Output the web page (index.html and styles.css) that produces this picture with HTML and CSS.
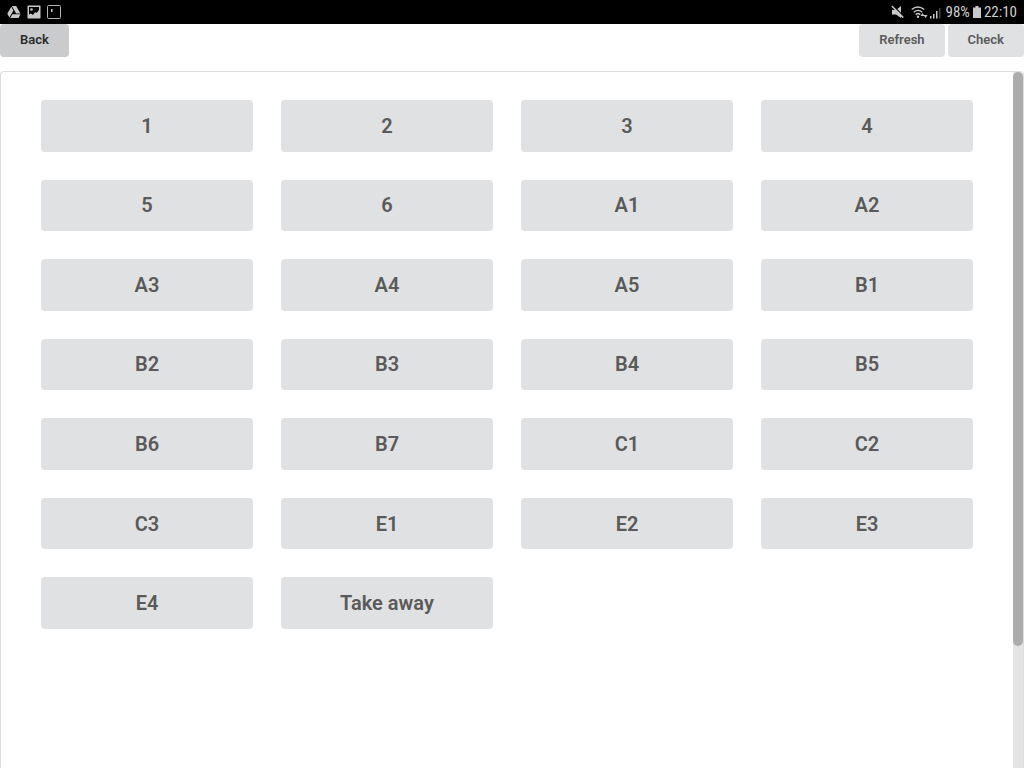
FILE: index.html
```html
<!DOCTYPE html>
<html lang="en">
<head>
<meta charset="utf-8">
<meta name="viewport" content="width=device-width, initial-scale=1">
<title>Tables</title>
<link rel="stylesheet" href="styles.css">
</head>
<body>
<header class="status">
  <div class="status-left">
    <svg width="14" height="14" viewBox="0 0 14 14" fill="#c8c8c8" aria-hidden="true"><path d="M4.800 1h4.400l4.200 7.400H9.100z"/><path d="M4.200 1.800l2.200 3.800-4 7L.3 8.800z"/><path d="M5.400 9.200h8.200L11.500 13H3.200z"/></svg>
    <svg width="14" height="14" viewBox="0 0 14 14" aria-hidden="true"><path fill="#c8c8c8" fill-rule="evenodd" d="M1 .5h12l.5.5v12l-.5.5H1L.5 13V1zM2 2v7.500l2-1 2 1.500 2-3 1.500 1L12 5V2z"/><circle cx="4.500" cy="4.500" r="1.300" fill="#c8c8c8"/></svg>
    <svg width="14" height="14" viewBox="0 0 14 14" aria-hidden="true"><rect x=".5" y=".5" width="13" height="13" rx="1" fill="none" stroke="#b4b4b4"/><path fill="#c8c8c8" d="M4 4h1.500v3H4z"/></svg>
  </div>
  <div class="status-right">
    <svg width="13" height="14" viewBox="0 0 13 14" aria-hidden="true"><path fill="#c8c8c8" d="M1 5h4l5-4v12L5 9.500H1z"/><path d="M1.500 0l12 12" stroke="#000" stroke-width="1.200"/><path d="M.8 1l11.400 11.600" stroke="#c8c8c8" stroke-width="1.500"/></svg>
    <svg class="wifi" width="32" height="14" viewBox="0 0 32 14" aria-hidden="true"><g fill="none" stroke="#c8c8c8" stroke-width="1.400"><path d="M.7 4.500q6-5 12.600 0M2.700 7.200q4.300-3.600 8.600 0M4.700 9.600q2.300-2 4.600 0"/></g><circle cx="7" cy="11.800" r="1.200" fill="#c8c8c8"/><path fill="#c8c8c8" d="M11.500 8l2 3h-4zM14.500 13l-2-3h4zM19 11h1.500v2.500H19zM22 9h1.500v4.500H22zM25 6h1.500v7.500H25z"/><path fill="#444" d="M28 3h1.500v10.500H28z"/></svg>
    <span class="level">98%</span>
    <svg width="8" height="12" viewBox="0 0 8 12" aria-hidden="true"><path fill="#c8c8c8" d="M2.500 0h3v1.500H8V12H0V1.500h2.500z"/></svg>
    <time class="clock">22:10</time>
  </div>
</header>
<nav class="toolbar">
  <button class="btn btn-back" type="button">Back</button>
  <div class="actions">
    <button class="btn" type="button">Refresh</button>
    <button class="btn" type="button">Check</button>
  </div>
</nav>
<main class="panel">
  <div class="tables">
    <button class="tile" type="button">1</button>
    <button class="tile" type="button">2</button>
    <button class="tile" type="button">3</button>
    <button class="tile" type="button">4</button>
    <button class="tile" type="button">5</button>
    <button class="tile" type="button">6</button>
    <button class="tile" type="button">A1</button>
    <button class="tile" type="button">A2</button>
    <button class="tile" type="button">A3</button>
    <button class="tile" type="button">A4</button>
    <button class="tile" type="button">A5</button>
    <button class="tile" type="button">B1</button>
    <button class="tile" type="button">B2</button>
    <button class="tile" type="button">B3</button>
    <button class="tile" type="button">B4</button>
    <button class="tile" type="button">B5</button>
    <button class="tile" type="button">B6</button>
    <button class="tile" type="button">B7</button>
    <button class="tile" type="button">C1</button>
    <button class="tile" type="button">C2</button>
    <button class="tile" type="button">C3</button>
    <button class="tile" type="button">E1</button>
    <button class="tile" type="button">E2</button>
    <button class="tile" type="button">E3</button>
    <button class="tile" type="button">E4</button>
    <button class="tile" type="button">Take away</button>
  </div>
  <div class="track"><div class="thumb"></div></div>
</main>
</body>
</html>
```
FILE: styles.css
```css
* { box-sizing: border-box; }

body {
  margin: 0;
  min-height: 100vh;
  display: flex;
  flex-direction: column;
  background: #fff;
  font-family: Roboto, "Liberation Sans", sans-serif;
}

.status {
  display: flex;
  justify-content: space-between;
  align-items: center;
  height: 24px;
  padding: 0 7px;
  background: #000;
  color: #d0d0d0;
}

.status-left { display: flex; gap: 6px; }

.status-right {
  display: flex;
  align-items: center;
  gap: 3px;
  font-family: "Roboto Condensed", "Liberation Sans Narrow", Roboto, sans-serif;
  font-size: 15px;
  line-height: 24px;
}

.wifi { margin-left: 4px; }

.toolbar {
  display: flex;
  justify-content: space-between;
  margin-bottom: 14px;
}

.actions { display: flex; gap: 3px; }

.btn {
  padding: 8px 20px 10px;
  border: 0;
  border-radius: 4px;
  background: #e0e1e2;
  color: #5a5a5a;
  font: 600 13px/15px Roboto, "Liberation Sans", sans-serif;
}

.btn-back {
  background: #cacbcd;
  color: #2b2b2c;
}

.panel {
  flex: 1;
  display: flex;
  border: 1px solid #dcdddd;
  border-bottom: 0;
  border-radius: 4px 4px 0 0;
}

.tables {
  flex: 1;
  display: grid;
  grid-template-columns: repeat(4, 1fr);
  gap: 28px;
  align-self: flex-start;
  min-height: 585px;
  padding: 28px 40px;
}

.tile {
  padding: 12px;
  border: 0;
  border-radius: 4px;
  background: #e0e1e2;
  color: #5a5a5a;
  font: 600 20px/24px Roboto, "Liberation Sans", sans-serif;
}

.track {
  width: 10px;
  background: #e4e4e4;
}

.thumb {
  height: 82.5%;
  border-radius: 5px;
  background: #acacac;
}
```
